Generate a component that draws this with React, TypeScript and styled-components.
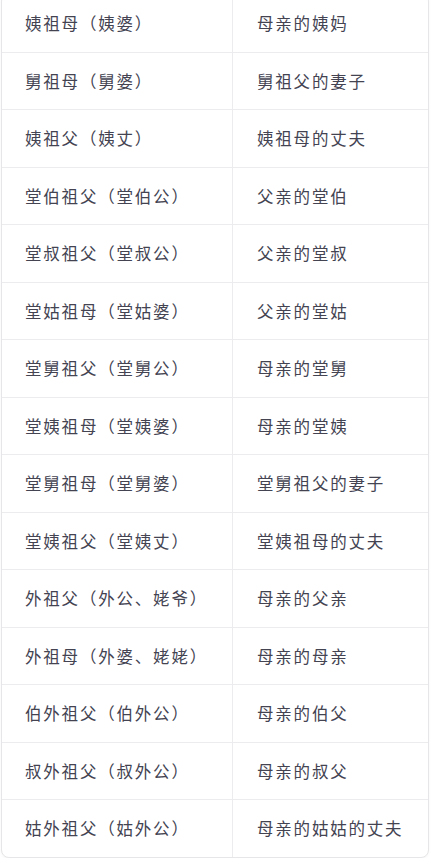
import styled, { createGlobalStyle } from "styled-components";

const GlobalStyle = createGlobalStyle`
  html, body {
    margin: 0;
    padding: 0;
    background: #ffffff;
  }
  body {
    font-family: "Noto Sans CJK SC", "Noto Sans", sans-serif;
    overflow: hidden;
  }
`;

const Table = styled.div`
  margin: -7px 2px 0 1px;
  border: 1px solid #e6e6e8;
  border-radius: 8px;
  overflow: hidden;
  background: #ffffff;
  box-shadow: 0 1px 3px rgba(0, 0, 0, 0.04);
`;

const Row = styled.div<{ first?: boolean }>`
  display: grid;
  grid-template-columns: 230px 1fr;
  height: ${(p) => (p.first ? "57.5px" : "56.5px")};
  border-top: ${(p) => (p.first ? "none" : "1px solid #ececee")};
  box-sizing: content-box;
`;

const Cell = styled.div<{ right?: boolean }>`
  display: flex;
  align-items: center;
  padding: ${(p) => (p.right ? "0 0 0 24px" : "0 0 0 23px")};
  border-left: ${(p) => (p.right ? "1px solid #ececee" : "none")};
  font-size: 16.5px;
  letter-spacing: 1.8px;
  color: #434352;
  white-space: nowrap;
`;

const rows: [string, string][] = [
  ["姨祖母（姨婆）", "母亲的姨妈"],
  ["舅祖母（舅婆）", "舅祖父的妻子"],
  ["姨祖父（姨丈）", "姨祖母的丈夫"],
  ["堂伯祖父（堂伯公）", "父亲的堂伯"],
  ["堂叔祖父（堂叔公）", "父亲的堂叔"],
  ["堂姑祖母（堂姑婆）", "父亲的堂姑"],
  ["堂舅祖父（堂舅公）", "母亲的堂舅"],
  ["堂姨祖母（堂姨婆）", "母亲的堂姨"],
  ["堂舅祖母（堂舅婆）", "堂舅祖父的妻子"],
  ["堂姨祖父（堂姨丈）", "堂姨祖母的丈夫"],
  ["外祖父（外公、姥爷）", "母亲的父亲"],
  ["外祖母（外婆、姥姥）", "母亲的母亲"],
  ["伯外祖父（伯外公）", "母亲的伯父"],
  ["叔外祖父（叔外公）", "母亲的叔父"],
  ["姑外祖父（姑外公）", "母亲的姑姑的丈夫"],
];

export default function App() {
  return (
    <>
      <GlobalStyle />
      <Table>
        {rows.map(([name, desc], i) => (
          <Row key={name} first={i === 0}>
            <Cell>{name}</Cell>
            <Cell right>{desc}</Cell>
          </Row>
        ))}
      </Table>
    </>
  );
}
